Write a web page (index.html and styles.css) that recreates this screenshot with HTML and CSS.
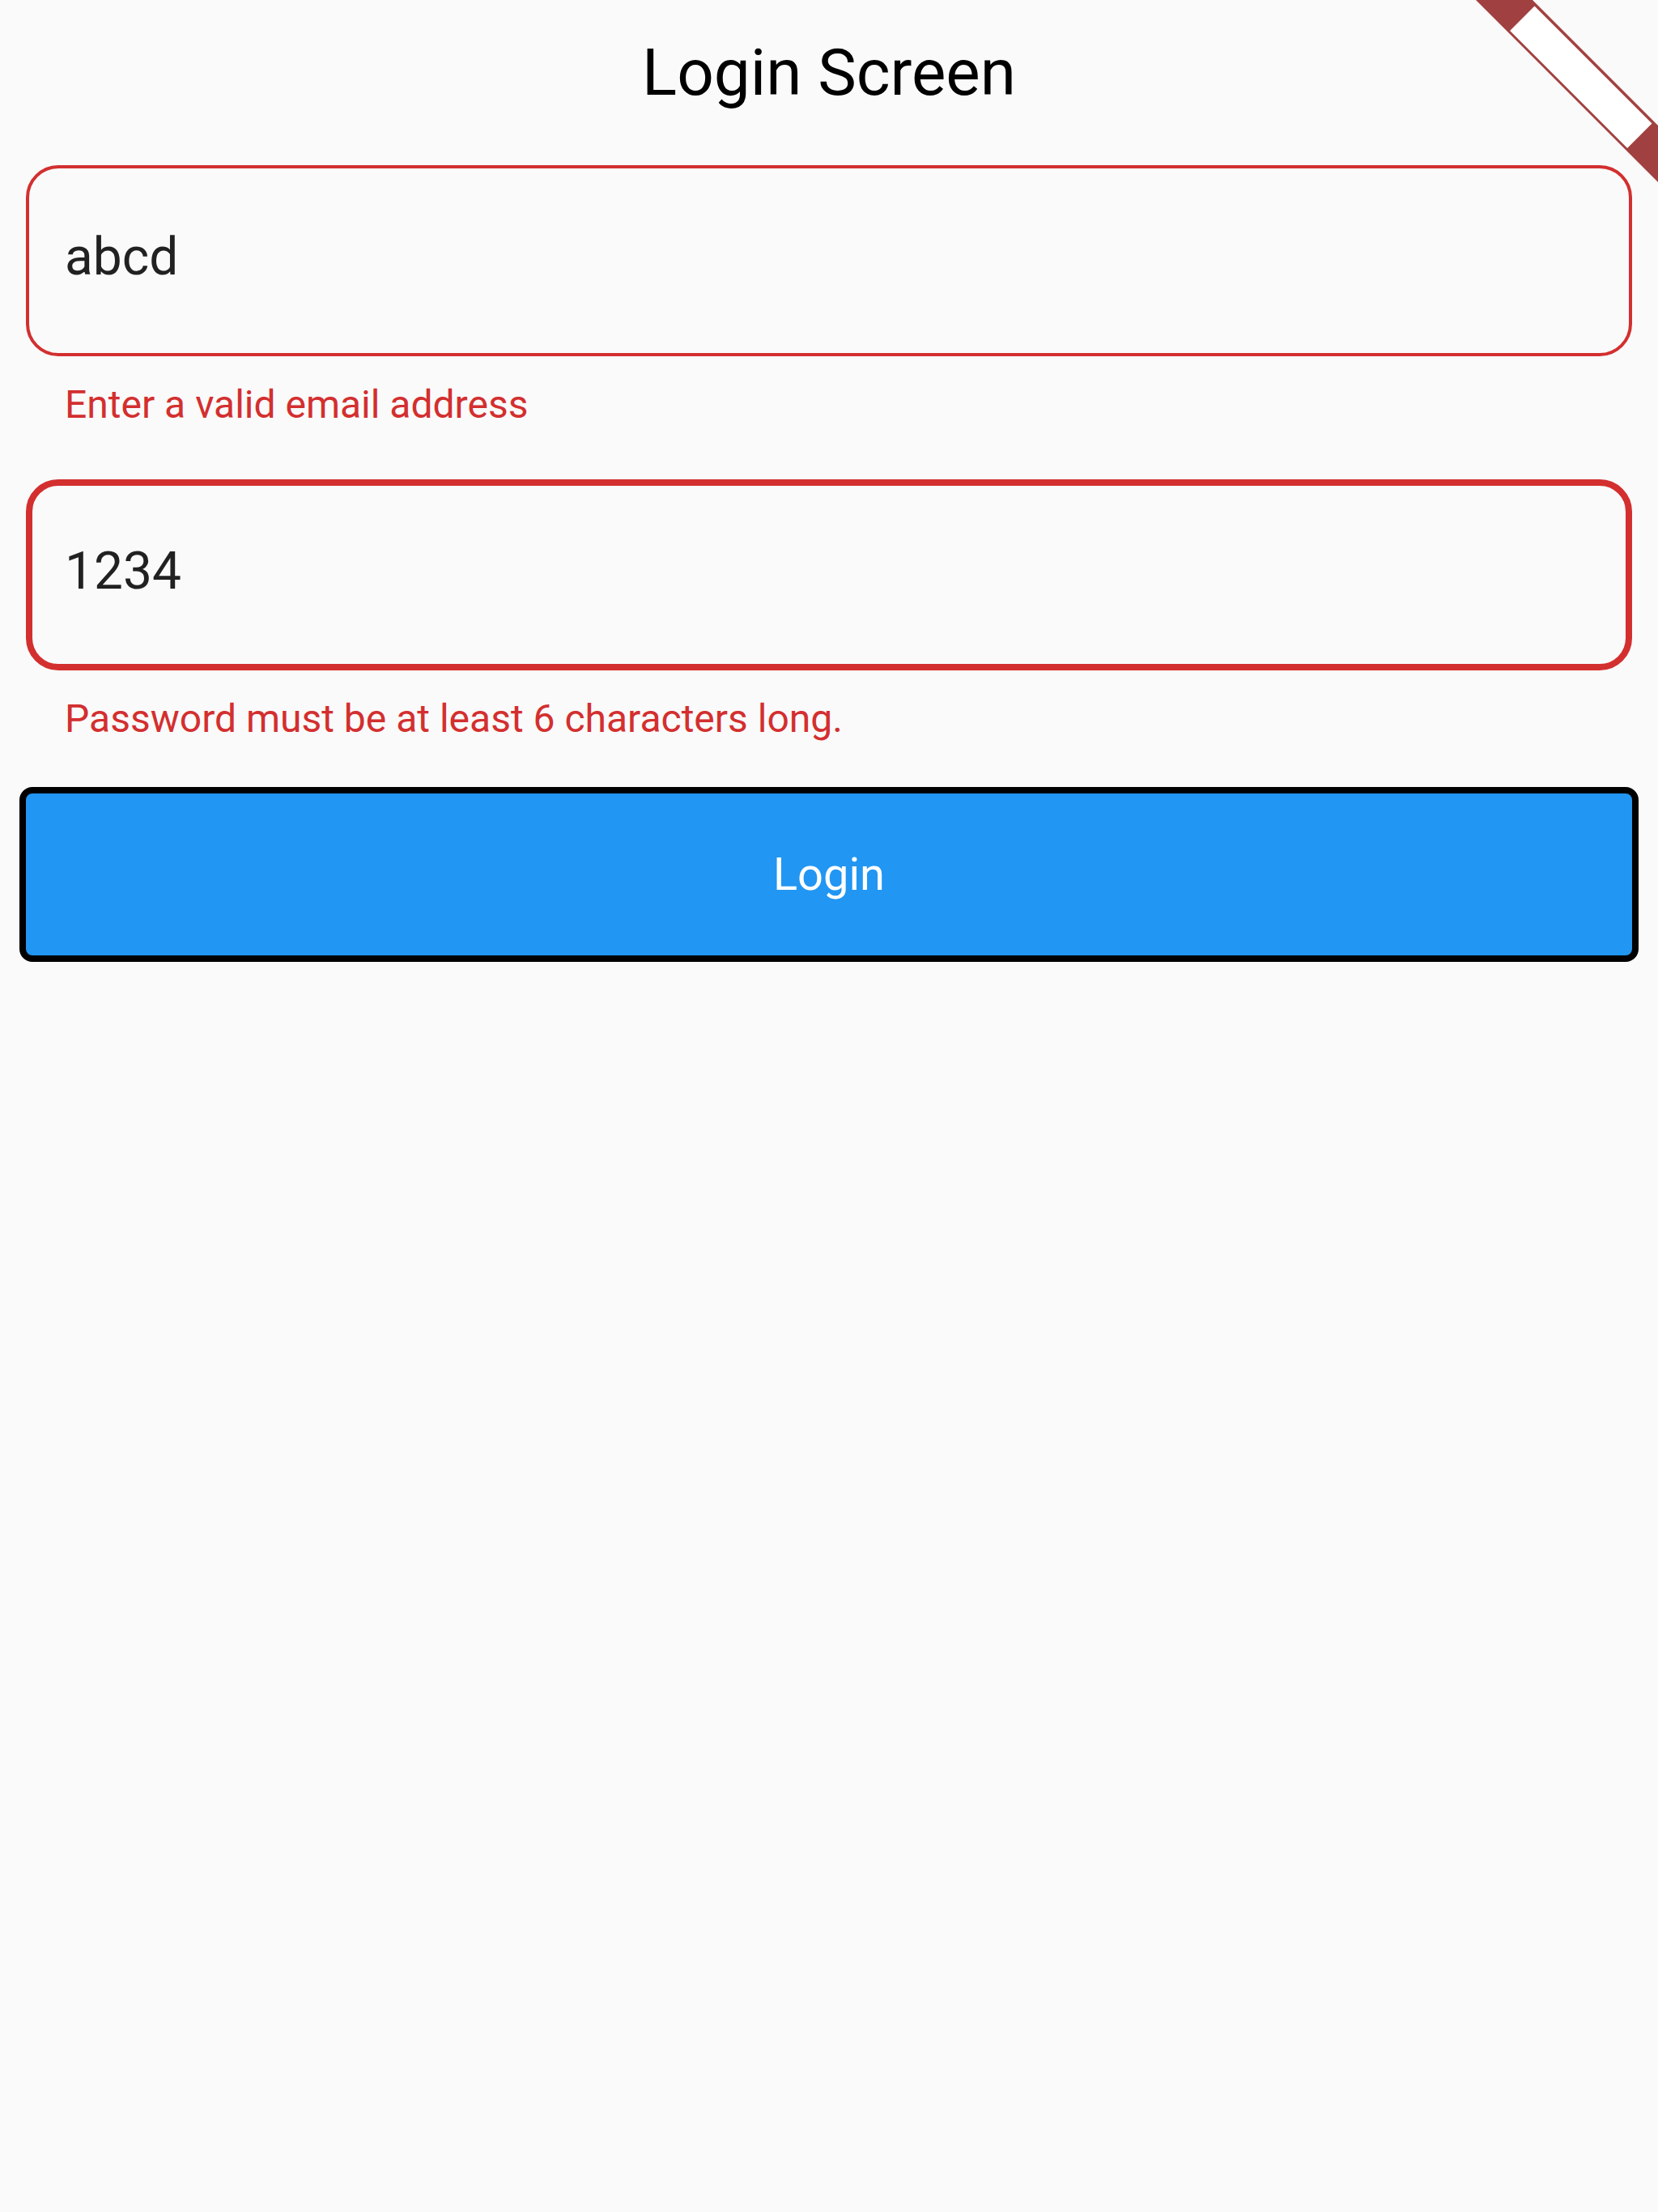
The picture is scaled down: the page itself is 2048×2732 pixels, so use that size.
FILE: index.html
```html
<!DOCTYPE html>
<html>
<head>
<meta charset="utf-8">
<title>Login Screen</title>
<link rel="stylesheet" href="styles.css">
</head>
<body>
<div class="page">
  <h1 class="title">Login Screen</h1>
  <div class="field field-error">abcd</div>
  <div class="error-text">Enter a valid email address</div>
  <div class="field field-focused">1234</div>
  <div class="error-text">Password must be at least 6 characters long.</div>
  <button class="login-btn" type="button">Login</button>
</div>
<svg class="debug-banner" viewBox="1780 0 268 240" width="268" height="240" aria-hidden="true">
  <polygon points="1823,0 1893,0 2048,155 2048,225" fill="#a14040"/>
  <polygon points="1895.5,7.5 2040.5,152.5 2010.1,182.9 1865.1,37.9" fill="#ffffff"/>
</svg>
</body>
</html>
```
FILE: styles.css
```css
html, body {
  margin: 0;
  padding: 0;
  background: #fafafa;
}
body {
  position: relative;
  min-height: 2732px;
  font-family: Roboto, "Noto Sans", "Liberation Sans", sans-serif;
}
.page {
  padding: 0 32px;
  display: flex;
  flex-direction: column;
}
.title {
  margin: 0;
  padding-top: 43px;
  font-size: 80px;
  line-height: 94px;
  font-weight: 400;
  color: #000;
  text-align: center;
}
.field {
  box-sizing: border-box;
  height: 236px;
  border-style: solid;
  border-color: #d32f2f;
  border-radius: 40px;
  font-size: 64px;
  line-height: 76px;
  color: rgba(0, 0, 0, 0.87);
}
.field-error {
  margin-top: 67px;
  border-width: 4px;
  padding: 72px 44px 0;
}
.field-focused {
  margin-top: 64px;
  border-width: 8px;
  padding: 68px 40px 0;
}
.error-text {
  margin-top: 32px;
  padding-left: 48px;
  font-size: 48px;
  line-height: 56px;
  color: #d32f2f;
}
.login-btn {
  margin: 56px -8px 0;
  height: 216px;
  box-sizing: border-box;
  border: 8px solid #000;
  border-radius: 16px;
  background: #2196f3;
  color: #fff;
  font-family: Roboto, "Noto Sans", "Liberation Sans", sans-serif;
  font-size: 56px;
  font-weight: 400;
  padding: 0;
  cursor: pointer;
}
.debug-banner {
  position: absolute;
  top: 0;
  right: 0;
  display: block;
}
```
